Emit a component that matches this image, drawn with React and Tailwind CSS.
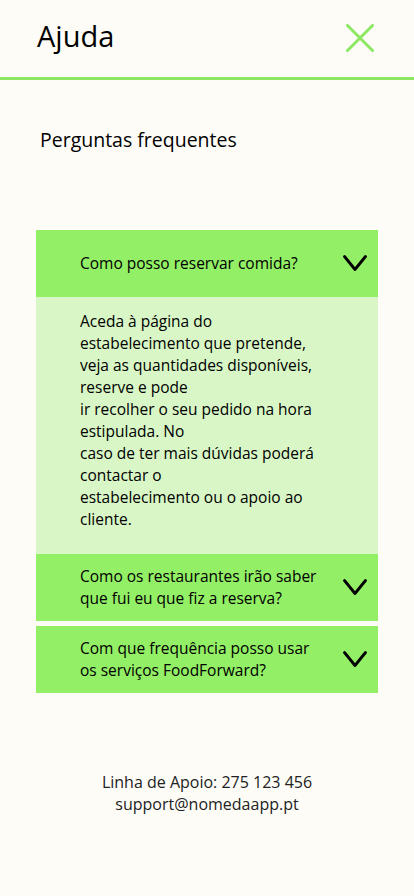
import { useState } from 'react';

const faqs = [
  {
    question: ['Como posso reservar comida?'],
    answer: [
      'Aceda à página do',
      'estabelecimento que pretende,',
      'veja as quantidades disponíveis,',
      'reserve e pode',
      'ir recolher o seu pedido na hora',
      'estipulada. No',
      'caso de ter mais dúvidas poderá',
      'contactar o',
      'estabelecimento ou o apoio ao',
      'cliente.',
    ],
  },
  {
    question: ['Como os restaurantes irão saber', 'que fui eu que fiz a reserva?'],
    answer: ['Ao chegar ao estabelecimento, indique', 'o código da sua reserva.'],
  },
  {
    question: ['Com que frequência posso usar', 'os serviços FoodForward?'],
    answer: ['Pode usar os serviços sempre que', 'quiser.'],
  },
];

const Chevron = () => (
  <svg width="24" height="17" viewBox="0 0 24 17" fill="none">
    <path d="M1.5 1.5 L12 14.5 L22.5 1.5" stroke="#000" strokeWidth="2.8" strokeLinecap="round" strokeLinejoin="round" />
  </svg>
);

export default function App() {
  const [open, setOpen] = useState(0);

  return (
    <div className="min-h-[896px] bg-[#fdfcf7] text-black" style={{ fontFamily: '"Open Sans", "Noto Sans", sans-serif' }}>
      <header className="flex h-[80px] items-center justify-between border-b-[3px] border-[#8ee762] pl-[37px] pr-[40px] pb-[6px]">
        <h1 className="text-[29px] leading-none">Ajuda</h1>
        <button type="button" aria-label="Fechar" className="mt-[4px]">
          <svg width="28" height="28" viewBox="0 0 28 28" fill="none">
            <path d="M1.5 1.5 L26.5 26.5 M26.5 1.5 L1.5 26.5" stroke="#8ee762" strokeWidth="3" strokeLinecap="round" />
          </svg>
        </button>
      </header>

      <h2 className="pl-[40px] pt-[50px] text-[19.5px] leading-none">Perguntas frequentes</h2>

      <div className="mx-[36px] mt-[80px] flex flex-col">
        {faqs.map((faq, index) => (
          <div key={index} className={open === index ? '' : 'mb-[5px]'}>
            <button
              type="button"
              onClick={() => setOpen(open === index ? -1 : index)}
              className="flex h-[67px] w-full items-center justify-between bg-[#93ef65] pl-[44px] pr-[11px] text-left"
            >
              <span className="text-[15.5px] leading-[22px]">
                {faq.question.map((line) => (
                  <span key={line} className="block whitespace-nowrap">{line}</span>
                ))}
              </span>
              <Chevron />
            </button>
            {open === index && (
              <div className="bg-[#d9f7c6] pl-[44px] pt-[13px] pb-[24px] text-[15.5px] leading-[22px]">
                {faq.answer.map((line) => (
                  <span key={line} className="block whitespace-nowrap">{line}</span>
                ))}
              </div>
            )}
          </div>
        ))}
      </div>

      <footer className="mt-[73px] text-center text-[16px] leading-[22px] text-[#222]">
        <p>Linha de Apoio: 275 123 456</p>
        <p>support@nomedaapp.pt</p>
      </footer>
    </div>
  );
}
